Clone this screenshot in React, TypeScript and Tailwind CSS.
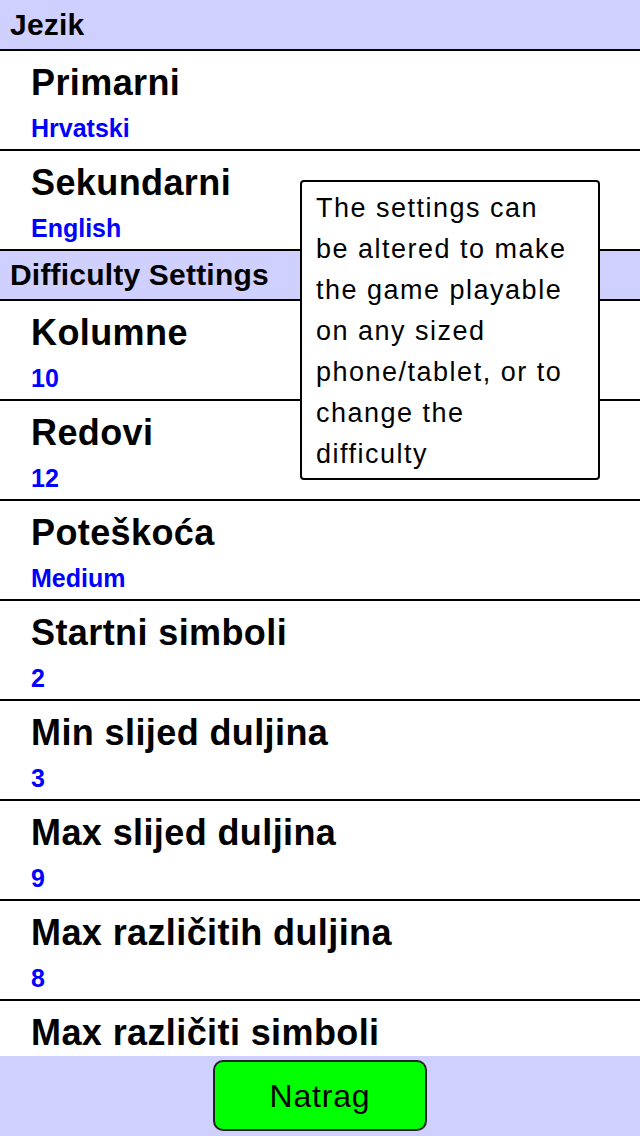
import React from "react";

const F = { fontFamily: '"Liberation Sans", Arial, sans-serif' };

function Header({ text, first }: { text: string; first?: boolean }) {
  return (
    <div
      className={
        first
          ? "h-[51px] shrink-0 bg-[#d0d0ff] border-b-2 border-black pl-[10px] text-[30px] leading-[49px] font-bold text-black tracking-[0.2px]"
          : "h-[50px] shrink-0 bg-[#d0d0ff] border-b-2 border-black pl-[10px] text-[30px] leading-[48px] font-bold text-black tracking-[0.2px]"
      }
    >
      {text}
    </div>
  );
}

function Row({ title, value }: { title: string; value: string }) {
  return (
    <div className="h-[100px] shrink-0 border-b-2 border-black pl-[31px] pt-[12px]">
      <div className="text-[36px] leading-[40px] font-bold text-black whitespace-nowrap tracking-[0.4px]">{title}</div>
      <div className="mt-[10px] text-[25px] leading-[30px] font-bold text-[#0000ff]">{value}</div>
    </div>
  );
}

export default function App() {
  const tip = [
    "The settings can",
    "be altered to make",
    "the game playable",
    "on any sized",
    "phone/tablet, or to",
    "change the",
    "difficulty",
  ];
  return (
    <div style={F} className="relative w-[640px] h-[1136px] bg-white flex flex-col overflow-hidden">
      <div className="flex-1 flex flex-col overflow-hidden">
        <Header text="Jezik" first />
        <Row title="Primarni" value="Hrvatski" />
        <Row title="Sekundarni" value="English" />
        <Header text="Difficulty Settings" />
        <Row title="Kolumne" value="10" />
        <Row title="Redovi" value="12" />
        <Row title="Poteškoća" value="Medium" />
        <Row title="Startni simboli" value="2" />
        <Row title="Min slijed duljina" value="3" />
        <Row title="Max slijed duljina" value="9" />
        <Row title="Max različitih duljina" value="8" />
        <Row title="Max različiti simboli" value="" />
      </div>
      <div className="h-[80px] shrink-0 bg-[#d0d0ff] flex justify-center items-start pt-[4px]">
        <button className="w-[214px] h-[71px] bg-[#00ff00] border-2 border-[#222] rounded-[10px] text-[32px] tracking-[0.8px] text-black leading-none">
          Natrag
        </button>
      </div>
      <div className="absolute left-[300px] top-[180px] w-[300px] h-[300px] bg-white border-2 border-black rounded-[4px] pl-[14px] pt-[6px]">
        {tip.map((l) => (
          <div key={l} className="text-[27px] leading-[41px] tracking-[1.5px] text-black whitespace-nowrap">
            {l}
          </div>
        ))}
      </div>
    </div>
  );
}
